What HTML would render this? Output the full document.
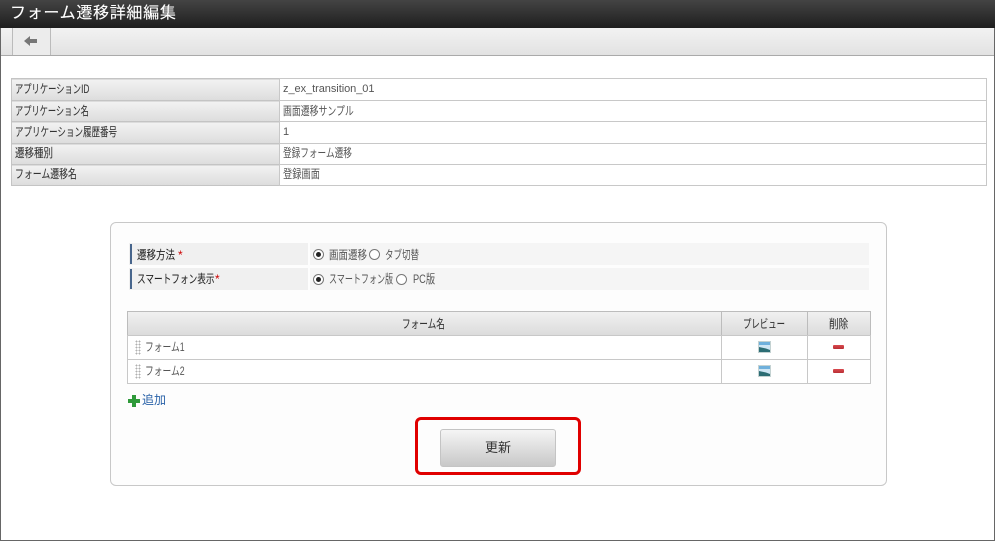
<!DOCTYPE html>
<html lang="ja"><head><meta charset="utf-8">
<style>
*{box-sizing:border-box}
html,body{margin:0;padding:0;width:995px;height:541px;overflow:hidden;background:#fff;position:relative;font-family:"Liberation Sans","WenQuanYi Zen Hei","Noto Sans CJK JP",sans-serif;color:#444;font-size:12px}
.a{position:absolute}
.t{position:absolute;white-space:nowrap;line-height:14px;font-size:12px;transform-origin:0 50%;color:#555}
.d{-webkit-text-stroke:.08px #444}
.lab{position:absolute;left:11px;width:269px;background:linear-gradient(#f3f3f3,#dddddd);border:1px solid #c4c4c4;box-shadow:inset 0 1px #dcdcdc}
.val{position:absolute;left:279px;width:708px;background:#fff;border:1px solid #c8c8c8}
.r{position:absolute;width:11px;height:11px;border:1px solid #777;border-radius:50%;background:#fff}
.r.on:after{content:"";position:absolute;left:2px;top:2px;width:5px;height:5px;border-radius:50%;background:#222}
.th{position:absolute;top:311px;height:25px;background:linear-gradient(#f0f0f0,#dcdcdc);border:1px solid #bcbcbc}
.td{position:absolute;height:25px;background:#fff;border:1px solid #c8c8c8}
.dots{position:absolute;left:135px;width:6px;height:15px;background-image:radial-gradient(#b0b0b0 0.8px,transparent 0.9px);background-size:3px 3px}
.prev{position:absolute;left:758px;width:13px;height:12px}
.del{position:absolute;left:833px;width:11px;height:4px;background:linear-gradient(#d9494e,#b92f35);border-radius:1px}
</style></head><body>
<div class="a" style="left:0;top:0;width:995px;height:541px;border:1px solid #666;border-top:0"></div>
<div class="a" style="left:0;top:0;width:995px;height:28px;background:linear-gradient(#444,#1e1e1e)"></div>
<div class="t" style="left:10px;top:5px;color:#fff;font-size:16px;line-height:18px;letter-spacing:.7px;-webkit-text-stroke:.12px #fff">フォーム遷移詳細編集</div>
<div class="a" style="left:1px;top:28px;width:993px;height:28px;background:linear-gradient(#f2f2f2,#e2e2e2);border-bottom:1px solid #aaa"></div>
<div class="a" style="left:12px;top:28px;width:39px;height:27px;border:1px solid #bbb;border-top:0;border-bottom:0;background:#ececec"></div>
<svg class="a" style="left:24px;top:35px" width="14" height="12" viewBox="0 0 14 12"><path d="M0 6L6 1V4H13V8H6V11Z" fill="#777"/></svg>

<div class="lab" style="top:78px;height:23px"></div><div class="val" style="top:78px;height:23px"></div>
<div class="lab" style="top:100px;height:22px"></div><div class="val" style="top:100px;height:22px"></div>
<div class="lab" style="top:121px;height:23px"></div><div class="val" style="top:121px;height:23px"></div>
<div class="lab" style="top:143px;height:22px"></div><div class="val" style="top:143px;height:22px"></div>
<div class="lab" style="top:164px;height:22px"></div><div class="val" style="top:164px;height:22px"></div>

<div class="t d" style="left:15px;top:82px;color:#333;transform:scaleX(.69)">アプリケーションID</div>
<div class="t d" style="left:15px;top:104px;color:#333;transform:scaleX(.685)">アプリケーション名</div>
<div class="t d" style="left:15px;top:125px;color:#333;transform:scaleX(.71)">アプリケーション履歴番号</div>
<div class="t d" style="left:15px;top:146px;color:#333;transform:scaleX(.79)">遷移種別</div>
<div class="t d" style="left:15px;top:167px;color:#333;transform:scaleX(.74)">フォーム遷移名</div>
<div class="t" style="left:283px;top:82px;font-size:11px;letter-spacing:-.05px">z_ex_transition_01</div>
<div class="t" style="left:283px;top:104px;transform:scaleX(.74)">画面遷移サンプル</div>
<div class="t" style="left:283px;top:125px;font-size:11px">1</div>
<div class="t" style="left:283px;top:146px;transform:scaleX(.72)">登録フォーム遷移</div>
<div class="t" style="left:283px;top:167px;transform:scaleX(.77)">登録画面</div>

<div class="a" style="left:110px;top:222px;width:777px;height:264px;background:#fdfdfd;border:1px solid #c8c8c8;border-radius:6px"></div>

<div class="a" style="left:129px;top:243px;width:179px;height:22px;background:#f0f0f0"></div>
<div class="a" style="left:310px;top:243px;width:559px;height:22px;background:#f5f5f5"></div>
<div class="a" style="left:130px;top:244px;width:2px;height:20px;background:#47658c"></div>
<div class="t d" style="left:137px;top:248px;color:#222;transform:scaleX(.79)">遷移方法</div>
<div class="t" style="left:178px;top:248px;color:#c00">*</div>
<div class="r on" style="left:313px;top:249px"></div>
<div class="t" style="left:329px;top:248px;transform:scaleX(.79)">画面遷移</div>
<div class="r" style="left:369px;top:249px"></div>
<div class="t" style="left:385px;top:248px;transform:scaleX(.71)">タブ切替</div>

<div class="a" style="left:129px;top:268px;width:179px;height:22px;background:#f0f0f0"></div>
<div class="a" style="left:310px;top:268px;width:559px;height:22px;background:#f5f5f5"></div>
<div class="a" style="left:130px;top:269px;width:2px;height:20px;background:#47658c"></div>
<div class="t d" style="left:137px;top:272px;color:#222;transform:scaleX(.72)">スマートフォン表示</div>
<div class="t" style="left:215px;top:272px;color:#c00">*</div>
<div class="r on" style="left:313px;top:274px"></div>
<div class="t" style="left:329px;top:272px;transform:scaleX(.67)">スマートフォン版</div>
<div class="r" style="left:396px;top:274px"></div>
<div class="t" style="left:413px;top:272px;transform:scaleX(.77)">PC版</div>

<div class="th" style="left:127px;width:595px"></div>
<div class="th" style="left:721px;width:87px"></div>
<div class="th" style="left:807px;width:64px"></div>
<div class="t d" style="left:402px;top:317px;color:#333;transform:scaleX(.72)">フォーム名</div>
<div class="t d" style="left:743px;top:317px;color:#333;transform:scaleX(.7)">プレビュー</div>
<div class="t d" style="left:829px;top:317px;color:#333;transform:scaleX(.8)">削除</div>

<div class="td" style="left:127px;top:335px;width:595px"></div>
<div class="td" style="left:721px;top:335px;width:87px"></div>
<div class="td" style="left:807px;top:335px;width:64px"></div>
<div class="td" style="left:127px;top:359px;width:595px"></div>
<div class="td" style="left:721px;top:359px;width:87px"></div>
<div class="td" style="left:807px;top:359px;width:64px"></div>
<div class="dots" style="top:340px"></div><div class="dots" style="top:364px"></div>
<div class="t" style="left:145px;top:340px;transform:scaleX(.73)">フォーム1</div>
<div class="t" style="left:145px;top:364px;transform:scaleX(.73)">フォーム2</div>
<svg class="prev" style="top:341px" viewBox="0 0 13 12"><rect width="13" height="12" fill="#c4d2d2"/><rect x="1" y="1" width="11" height="10" fill="#cfe6f4"/><rect x="1" y="1" width="11" height="3" fill="#6fb0dc"/><path d="M1 6L8 7.500L12 9V11H1Z" fill="#2c6d74"/></svg>
<svg class="prev" style="top:365px" viewBox="0 0 13 12"><rect width="13" height="12" fill="#c4d2d2"/><rect x="1" y="1" width="11" height="10" fill="#cfe6f4"/><rect x="1" y="1" width="11" height="3" fill="#6fb0dc"/><path d="M1 6L8 7.500L12 9V11H1Z" fill="#2c6d74"/></svg>
<div class="del" style="top:345px"></div><div class="del" style="top:369px"></div>

<svg class="a" style="left:128px;top:395px" width="12" height="12" viewBox="0 0 12 12"><path d="M4 0H8V4H12V8H8V12H4V8H0V4H4Z" fill="#2f9a3a"/></svg>
<div class="t" style="left:142px;top:393px;color:#2a62a8;font-size:12px">追加</div>

<div class="a" style="left:415px;top:417px;width:166px;height:58px;border:3px solid #e00000;border-radius:6px"></div>
<div class="a" style="left:440px;top:429px;width:116px;height:38px;background:linear-gradient(#f5f5f5,#c8c8c8);border:1px solid #c4c4c4;border-radius:3px"></div>
<div class="t" style="left:485px;top:440px;font-size:13px;line-height:16px;color:#333">更新</div>
</body></html>
